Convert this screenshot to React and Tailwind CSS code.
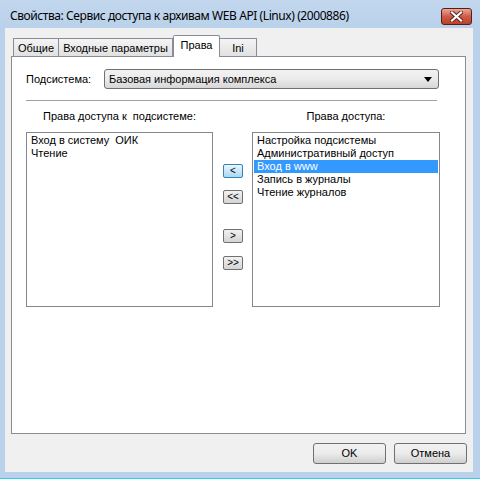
import React from "react";

const ui = { fontFamily: '"Liberation Sans", Arial, sans-serif' };

function SmallButton({ label, focused }) {
  return (
    <div
      className={`w-[20px] h-[14px] rounded-[2px] border flex items-center justify-center text-[10px] leading-none text-black ${
        focused
          ? "border-[#3c7fb1] bg-gradient-to-b from-[#eaf6fd] to-[#a7d9f5]"
          : "border-[#707070] bg-gradient-to-b from-[#f2f2f2] to-[#d4d4d4]"
      }`}
    >
      <span className="-mt-px">{label}</span>
    </div>
  );
}

function DialogButton({ children }) {
  return (
    <div className="w-[73px] h-[21px] rounded-[3px] border border-[#707070] bg-gradient-to-b from-[#f2f2f2] via-[#ebebeb] to-[#cfcfcf] flex items-center justify-center text-[11px] text-black">
      {children}
    </div>
  );
}

export default function App() {
  const left = ["Вход в систему  ОИК", "Чтение"];
  const right = [
    "Настройка подсистемы",
    "Административный доступ",
    "Вход в www",
    "Запись в журналы",
    "Чтение журналов",
  ];
  const tabs = [
    { name: "Общие", w: "w-[46px]" },
    { name: "Входные параметры", w: "w-[115px]" },
    { name: "Права", w: "w-[47px]", active: true },
    { name: "Ini", w: "w-[38px]" },
  ];

  return (
    <div className="w-[480px] h-[479px] bg-[#b9d1ea] flex flex-col overflow-hidden" style={ui}>
      {/* title bar */}
      <div className="h-[28px] flex items-start bg-gradient-to-b from-[#c2d7ee] to-[#b9d1ea]">
        <div
          className="ml-[10px] mt-[9px] text-[12px] leading-[14px] text-black whitespace-nowrap"
          style={{ fontFamily: '"Noto Sans", "Liberation Sans", sans-serif', letterSpacing: "-0.42px" }}
        >
          Свойства: Сервис доступа к архивам WEB API (Linux) (2000886)
        </div>
        <div className="ml-auto mr-[8px] mt-[8px] w-[31px] h-[17px] rounded-[3px] border border-[#5c1b14] bg-gradient-to-b from-[#e8a899] via-[#cf5a45] to-[#b8412c] flex items-center justify-center">
          <svg width="13" height="11" viewBox="0 0 13 11">
            <path d="M2 1.5 L11 9.5 M11 1.5 L2 9.5" stroke="#5a1f1a" strokeWidth="4" strokeLinecap="square" />
            <path d="M2 1.5 L11 9.5 M11 1.5 L2 9.5" stroke="#ffffff" strokeWidth="2.2" strokeLinecap="square" />
          </svg>
        </div>
      </div>

      {/* client area */}
      <div className="mx-[5px] w-[468px] h-[444px] bg-[#f0f0f0] flex flex-col">
        {/* tabs */}
        <div className="mt-[7px] ml-[8px] h-[22px] flex items-end relative z-10">
          {tabs.map((t) =>
            t.active ? (
              <div
                key={t.name}
                className={`${t.w} h-[22px] bg-white border border-b-0 border-[#898c95] rounded-t-[2px] flex justify-center pt-[3px] text-[11px] leading-[13px] text-black`}
              >
                {t.name}
              </div>
            ) : (
              <div
                key={t.name}
                className={`${t.w} h-[18px] mb-px bg-gradient-to-b from-[#f4f4f4] to-[#e1e1e1] border border-b-0 border-[#898c95] -ml-px first:ml-0 flex justify-center pt-[3px] text-[11px] leading-[13px] text-black`}
              >
                {t.name}
              </div>
            )
          )}
        </div>

        {/* panel */}
        <div className="-mt-px ml-[6px] w-[455px] h-[378px] bg-white border border-[#898c95] flex flex-col pl-[14px]">
          <div className="mt-[12px] flex items-center">
            <div className="w-[78px] text-[11px] text-black">Подсистема:</div>
            <div className="w-[335px] h-[20px] rounded-[3px] border border-[#707070] bg-gradient-to-b from-[#f2f2f2] via-[#ebebeb] to-[#d6d6d6] flex items-center pl-[4px] pr-[6px] text-[11px] text-black">
              <span>Базовая информация комплекса</span>
              <svg className="ml-auto" width="8" height="5" viewBox="0 0 8 5">
                <path d="M0 0 H8 L4 5 Z" fill="#000" />
              </svg>
            </div>
          </div>

          <div className="mt-[11px] w-[411px] h-px bg-[#a0a0a0]" />

          <div className="mt-[9px] flex text-[11px] leading-[13px] text-black">
            <div className="w-[187px] text-center whitespace-pre">Права доступа к  подсистеме:</div>
            <div className="w-[39px]" />
            <div className="w-[188px] text-center">Права доступа:</div>
          </div>

          <div className="mt-[9px] flex">
            <div className="w-[187px] h-[175px] border border-[#828790] p-px">
              {left.map((s) => (
                <div key={s} className="h-[13px] pl-[3px] text-[11px] leading-[13px] text-black whitespace-pre">
                  {s}
                </div>
              ))}
            </div>

            <div className="w-[39px] flex flex-col pl-[10px] pt-[32px]">
              <SmallButton label="<" focused />
              <div className="mt-[12px]">
                <SmallButton label="<<" />
              </div>
              <div className="mt-[25px]">
                <SmallButton label=">" />
              </div>
              <div className="mt-[13px]">
                <SmallButton label=">>" />
              </div>
            </div>

            <div className="w-[188px] h-[175px] border border-[#828790] p-px">
              {right.map((s, i) => (
                <div
                  key={s}
                  className={`h-[13px] pl-[3px] text-[11px] leading-[13px] whitespace-pre ${
                    i === 2 ? "bg-[#3399ff] text-white" : "text-black"
                  }`}
                >
                  {s}
                </div>
              ))}
            </div>
          </div>
        </div>

        {/* bottom buttons */}
        <div className="mt-[9px] flex justify-end gap-[8px] pr-[6px]">
          <DialogButton>OK</DialogButton>
          <DialogButton>Отмена</DialogButton>
        </div>
      </div>

      <div className="h-[6px]" />
      <div className="h-px bg-[#2fd0ea]" />
    </div>
  );
}
